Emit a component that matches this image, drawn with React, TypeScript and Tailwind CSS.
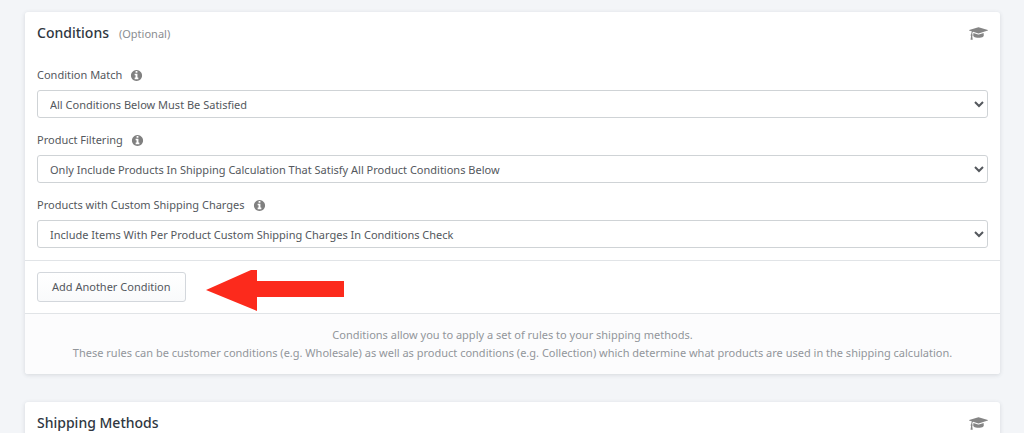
import { useState } from "react";
import type { ReactNode } from "react";

const fields = [
  {
    id: "condition-match",
    label: "Condition Match",
    options: ["All Conditions Below Must Be Satisfied"],
  },
  {
    id: "product-filtering",
    label: "Product Filtering",
    options: [
      "Only Include Products In Shipping Calculation That Satisfy All Product Conditions Below",
    ],
  },
  {
    id: "custom-charges",
    label: "Products with Custom Shipping Charges",
    options: [
      "Include Items With Per Product Custom Shipping Charges In Conditions Check",
    ],
  },
];

function InfoIcon() {
  return (
    <svg viewBox="0 0 1792 1792" className="size-[13px] fill-[#808080]" aria-hidden="true">
      <path d="M1152 1376v-160q0-14-9-23t-23-9h-96v-512q0-14-9-23t-23-9h-320q-14 0-23 9t-9 23v160q0 14 9 23t23 9h96v320h-96q-14 0-23 9t-9 23v160q0 14 9 23t23 9h448q14 0 23-9t9-23zm-128-896v-160q0-14-9-23t-23-9h-192q-14 0-23 9t-9 23v160q0 14 9 23t23 9h192q14 0 23-9t9-23zm640 416q0 209-103 385.5t-279.5 279.5-385.5 103-385.5-103-279.5-279.5-103-385.5 103-385.5 279.5-279.5 385.5-103 385.5 103 279.5 279.5 103 385.5z" />
    </svg>
  );
}

function CapIcon() {
  return (
    <svg viewBox="0 0 2304 1792" className="h-[15px] w-[19px] fill-[#858585]" aria-hidden="true">
      <path d="M1774 836l18 316q4 69-82 128t-235 93.5-323 34.5-323-34.5-235-93.5-82-128l18-316 574 181q22 7 48 7t48-7zm530-324q0 23-22 31l-1120 352q-4 1-10 1t-10-1l-652-206q-43 34-71 111.5t-34 178.5q63 36 63 109 0 69-58 107l58 433q2 14-8 25-9 11-24 11h-192q-15 0-24-11-10-11-8-25l58-433q-58-38-58-107 0-73 65-111 11-207 98-330l-333-104q-22-8-22-31t22-31l1120-352q4-1 10-1t10 1l1120 352q22 8 22 31z" />
    </svg>
  );
}

function Card({ title, note, children }: { title: string; note?: string; children?: ReactNode }) {
  return (
    <section className="rounded-[3px] bg-white shadow-[0_1px_4px_rgba(60,70,80,0.16)]">
      <header className="flex items-center justify-between px-3 pt-[11px] pb-[10px]">
        <div className="flex items-baseline gap-2.5">
          <h2 className="text-[14px] leading-5 font-medium text-[#30373f]">{title}</h2>
          {note && <span className="text-[11px] text-[#8a8d91]">{note}</span>}
        </div>
        <a href="#help" aria-label={`${title} help`}>
          <CapIcon />
        </a>
      </header>
      {children}
    </section>
  );
}

export default function App() {
  const [values, setValues] = useState<Record<string, string>>({});

  return (
    <main className="h-screen overflow-hidden bg-[#f3f5f8] pt-3 pr-6 pl-[25px] font-['Noto_Sans',sans-serif] text-[11px] text-[#54585d]">
      <div className="flex flex-col gap-7">
        <Card title="Conditions" note="(Optional)">
          <div className="flex flex-col gap-3 px-3 py-3">
            {fields.map((f) => (
              <div key={f.id}>
                <div className="mb-[5px] flex items-center gap-2 leading-5">
                  <label htmlFor={f.id}>{f.label}</label>
                  <InfoIcon />
                </div>
                <select
                  id={f.id}
                  value={values[f.id] ?? f.options[0]}
                  onChange={(e) => setValues({ ...values, [f.id]: e.target.value })}
                  className="block h-7 w-full rounded-[3px] border border-[#cfd3d6] bg-white px-2"
                >
                  {f.options.map((o) => (
                    <option key={o}>{o}</option>
                  ))}
                </select>
              </div>
            ))}
          </div>

          <div className="flex items-center gap-5 border-t border-[#e1e4e7] px-3 py-[11px]">
            <button
              type="button"
              className="h-[30px] rounded-[3px] border border-[#d3d7dc] bg-linear-to-b from-white to-[#f9fafb] px-3.5"
            >
              Add Another Condition
            </button>
            <svg viewBox="0 0 138 42" className="-mt-0.5 -mb-2.5 h-[42px] w-[138px] fill-[#fc2a1c]" aria-hidden="true">
              <path d="M0 20 45 0h6v11h87v16H51v14Z" />
            </svg>
          </div>

          <p className="rounded-b-[3px] border-t border-[#e1e4e7] bg-[#fcfcfd] px-3 py-3 text-center leading-[18px] text-[#92969b]">
            Conditions allow you to apply a set of rules to your shipping methods.
            <br />
            These rules can be customer conditions (e.g. Wholesale) as well as product conditions (e.g.
            Collection) which determine what products are used in the shipping calculation.
          </p>
        </Card>

        <Card title="Shipping Methods" />
      </div>
    </main>
  );
}
